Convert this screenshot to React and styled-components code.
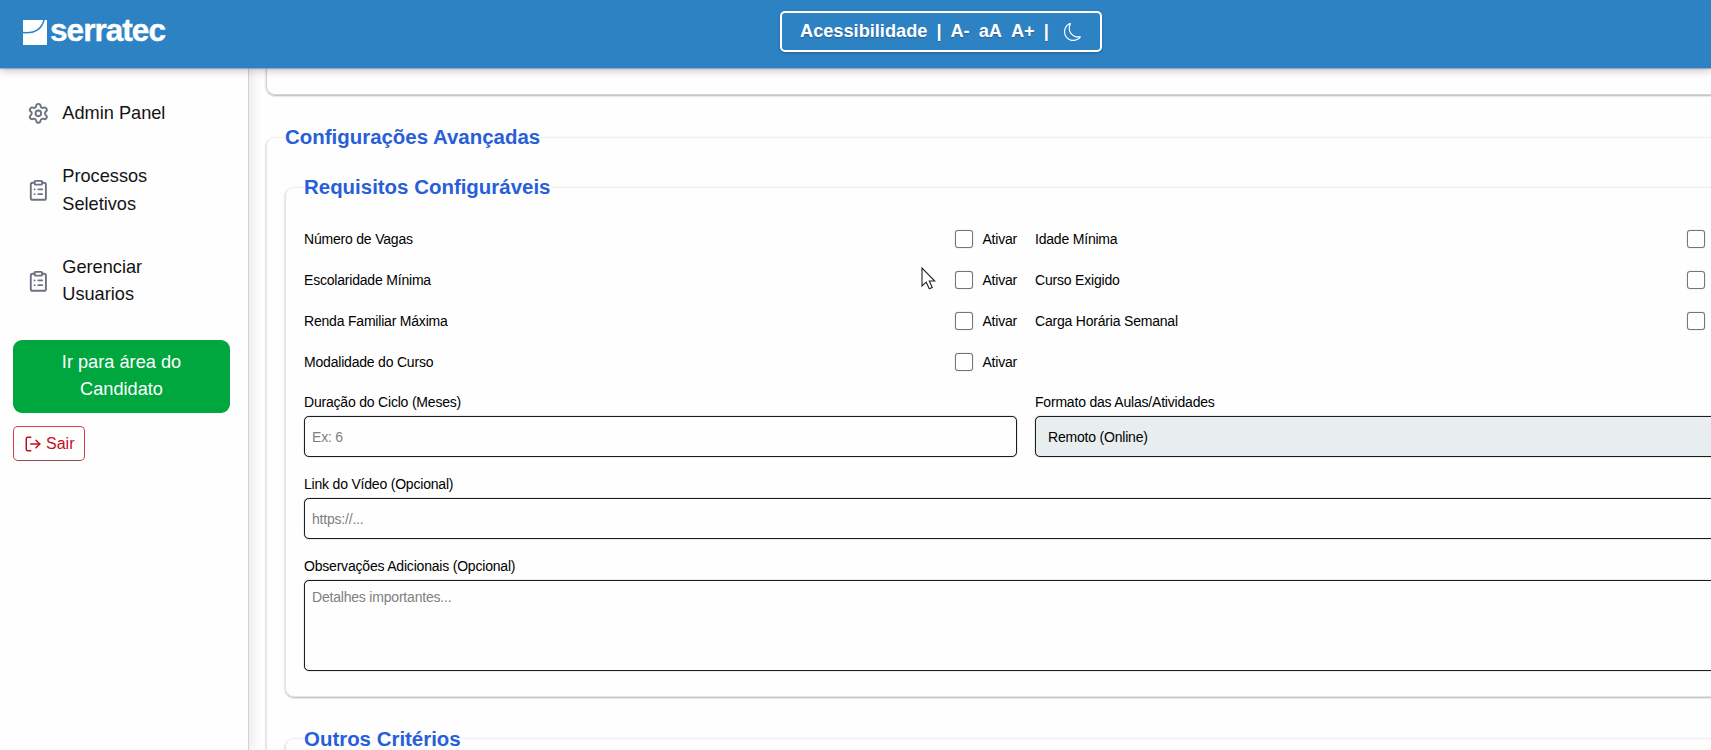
import React from "react";
import styled, { createGlobalStyle } from "styled-components";
import { Settings, ClipboardList, LogOut } from "lucide-react";
import { BsMoon } from "react-icons/bs";

const GlobalStyle = createGlobalStyle`
  * { box-sizing: border-box; }
  html, body { margin: 0; padding: 0; overflow: hidden; }
  body {
    background: #fefefe;
    color: #141414;
    font-family: "Liberation Sans", Arial, sans-serif;
    font-size: 18.2px;
  }
  input, select, textarea, button { font-family: inherit; margin: 0; }
`;

const Page = styled.div`
  width: 1711px;
  height: 750px;
  overflow: hidden;
  display: flex;
  flex-direction: column;
`;

const Header = styled.header`
  position: relative;
  z-index: 2;
  flex: none;
  height: 68px;
  display: flex;
  align-items: flex-start;
  background: #2d82c4;
  box-shadow: 0 1px 1px rgba(90, 110, 170, 0.45), 0 3px 8px rgba(0, 0, 0, 0.22);
`;

const Brand = styled.div`
  width: 780px;
  flex: none;
  display: flex;
  padding: 12px 0 0 23px;
  gap: 3px;
  color: #fff;
  svg { margin-top: 8px; flex: none; }
`;

const BrandName = styled.span`
  font-size: 31.5px;
  line-height: 37px;
  font-weight: 700;
  letter-spacing: -0.95px;
  -webkit-text-stroke: 0.4px #fff;
`;

const AccessBar = styled.div`
  width: 322px;
  height: 41px;
  margin-top: 11px;
  padding-left: 18px;
  display: flex;
  align-items: center;
  border: 2px solid #fff;
  border-radius: 5px;
  color: #fff;
  font-size: 18.2px;
  font-weight: 700;
  white-space: pre;
  box-shadow: 0 1px 3px rgba(0, 0, 0, 0.25);
  text-shadow: 0 1px 1px rgba(0, 0, 0, 0.25);
`;

const AccessItem = styled.span`
  margin-right: ${(p) => p.$gap || 9}px;
  margin-top: -1px;
`;

const Body = styled.div`
  flex: 1;
  min-height: 0;
  display: flex;
`;

const Sidebar = styled.aside`
  position: relative;
  z-index: 1;
  flex: none;
  width: 249px;
  padding: 23px 18px 0 13px;
  background: #fefefe;
  border-right: 1px solid #d2d2d4;
  box-shadow: 2px 0 12px rgba(0, 0, 0, 0.11);
`;

const NavItem = styled.a`
  display: flex;
  align-items: center;
  gap: 13px;
  padding: 9px 13.6px;
  margin-bottom: ${(p) => p.$after || 18}px;
  line-height: 27.3px;
  svg { color: #6b7280; flex: none; }
`;

const CandidateButton = styled.button`
  display: block;
  width: 217px;
  height: 73px;
  padding: 0 30px 1px;
  border: 0;
  border-radius: 9px;
  background: #00a63e;
  color: #fff;
  font-size: 18.2px;
  line-height: 27.3px;
`;

const ExitButton = styled.button`
  display: flex;
  align-items: center;
  gap: 4px;
  width: 72px;
  height: 35px;
  margin-top: 13px;
  padding: 0 0 0 10px;
  border: 1px solid #d93a4a;
  border-bottom-color: #8f4a52;
  border-radius: 5px;
  background: #fefefe;
  color: #c10f1c;
  font-size: 16px;
`;

const Main = styled.main`
  flex: 1;
  min-width: 0;
  padding-left: 17px;
  overflow: hidden;
`;

const PreviousCard = styled.section`
  width: 1520px;
  height: 27px;
  margin-bottom: 28px;
  border: 1px solid #d4d4d6;
  border-top: 0;
  border-radius: 0 0 9px 9px;
  box-shadow: 0 1px 2px rgba(0, 0, 0, 0.3);
`;

const Group = styled.fieldset`
  width: ${(p) => p.$width}px;
  min-width: 0;
  margin: 0 0 ${(p) => p.$after || 0}px;
  padding: ${(p) => p.$top}px 18px ${(p) => p.$bottom}px;
  border: 1px solid #e3e4e6;
  border-top-color: #efeff0;
  border-radius: 9px;
  box-shadow: 0 1px 2px rgba(0, 0, 0, 0.3);
`;

const Legend = styled.legend`
  padding: 0;
  color: #285ed9;
  font-size: 20.45px;
  line-height: 28px;
  font-weight: 700;
`;

const RequirementGrid = styled.div`
  display: grid;
  grid-template-columns: 713px 714px;
  gap: 18.2px 18px;
`;

const Requirement = styled.label`
  display: flex;
  align-items: center;
  height: 22.7px;
  font-size: 14px;
  letter-spacing: -0.2px;
  color: #000;
`;

const RequirementName = styled.span`
  flex: 1;
`;

const Check = styled.input.attrs({ type: "checkbox" })`
  appearance: none;
  width: 18px;
  height: 18px;
  margin-right: 9.7px !important;
  border: 1px solid #767676;
  border-radius: 3px;
  background: #fff;
  box-shadow: 0 0 1px rgba(0, 0, 0, 0.45);
`;

const FieldGrid = styled.div`
  display: grid;
  grid-template-columns: 713px 714px;
  gap: 15.8px 18px;
  margin-top: 18.2px;
`;

const Field = styled.label`
  display: flex;
  flex-direction: column;
  grid-column: ${(p) => (p.$wide ? "1 / -1" : "auto")};
  font-size: 14px;
  letter-spacing: -0.2px;
  line-height: 23.6px;
  color: #000;
`;

const control = `
  width: 100%;
  height: 41px;
  margin-top: 1.4px !important;
  border: 1px solid #1c1c1c;
  border-radius: 5px;
  background: #fefefe;
  color: #000;
  font-size: 14px;
  letter-spacing: -0.2px;
  padding: 0 7px;
  box-shadow: 0 0 1px rgba(0, 0, 0, 0.7);
  &::placeholder { color: #808080; }
`;

const Input = styled.input`${control}`;
const Select = styled.select`
  ${control}
  padding-left: 8px;
  background: #e8edef;
`;
const TextArea = styled.textarea`
  ${control}
  height: 91px;
  padding-top: 7px;
  line-height: 18px;
  resize: none;
`;

const Cursor = styled.svg`
  position: absolute;
  z-index: 3;
  left: 921px;
  top: 267px;
`;

const requirements = [
  "Número de Vagas",
  "Idade Mínima",
  "Escolaridade Mínima",
  "Curso Exigido",
  "Renda Familiar Máxima",
  "Carga Horária Semanal",
  "Modalidade do Curso",
];

export default function App() {
  return (
    <Page>
      <GlobalStyle />
      <Header>
        <Brand>
          <svg width="24" height="25" viewBox="0 0 24 25">
            <path d="M0 0H24V25H0Z" fill="#fff" />
            <path d="M0 12.5C11 13.5 18.5 10 21 0" fill="none" stroke="#2d82c4" strokeWidth="1.5" />
          </svg>
          <BrandName>serratec</BrandName>
        </Brand>
        <AccessBar>
          <AccessItem>Acessibilidade</AccessItem>
          <AccessItem>|</AccessItem>
          <AccessItem>A-</AccessItem>
          <AccessItem>aA</AccessItem>
          <AccessItem>A+</AccessItem>
          <AccessItem $gap={15}>|</AccessItem>
          <BsMoon size={18} />
        </AccessBar>
      </Header>
      <Body>
        <Sidebar>
          <NavItem>
            <Settings size={22.7} />
            Admin Panel
          </NavItem>
          <NavItem>
            <ClipboardList size={22.7} />
            <span>Processos<br />Seletivos</span>
          </NavItem>
          <NavItem $after={22.8}>
            <ClipboardList size={22.7} />
            <span>Gerenciar<br />Usuarios</span>
          </NavItem>
          <CandidateButton>Ir para área do Candidato</CandidateButton>
          <ExitButton>
            <LogOut size={18} />
            Sair
          </ExitButton>
        </Sidebar>
        <Main>
          <PreviousCard />
          <Group $width={1520} $top={22} $bottom={30}>
            <Legend>Configurações Avançadas</Legend>
            <Group $width={1483} $top={26.8} $bottom={25.4} $after={27.6}>
              <Legend>Requisitos Configuráveis</Legend>
              <RequirementGrid>
                {requirements.map((name) => (
                  <Requirement key={name}>
                    <RequirementName>{name}</RequirementName>
                    <Check />
                    Ativar
                  </Requirement>
                ))}
              </RequirementGrid>
              <FieldGrid>
                <Field>
                  Duração do Ciclo (Meses)
                  <Input placeholder="Ex: 6" />
                </Field>
                <Field>
                  Formato das Aulas/Atividades
                  <Select>
                    <option>Remoto (Online)</option>
                  </Select>
                </Field>
                <Field $wide>
                  Link do Vídeo (Opcional)
                  <Input placeholder="https://..." />
                </Field>
                <Field $wide>
                  Observações Adicionais (Opcional)
                  <TextArea placeholder="Detalhes importantes..." />
                </Field>
              </FieldGrid>
            </Group>
            <Group $width={1483} $top={27} $bottom={26}>
              <Legend>Outros Critérios</Legend>
            </Group>
          </Group>
        </Main>
      </Body>
      <Cursor width="15" height="23" viewBox="0 0 15 23">
        <path
          d="M1 1V19L5.2 15.2L8.3 21.8L11.3 20.4L8.3 14H13.8Z"
          fill="#fff"
          stroke="#222"
          strokeWidth="1.1"
        />
      </Cursor>
    </Page>
  );
}
